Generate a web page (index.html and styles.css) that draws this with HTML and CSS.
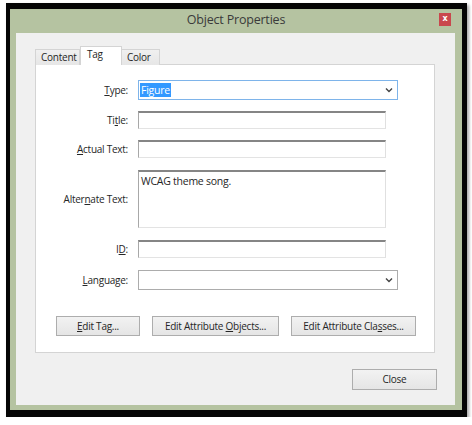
FILE: index.html
```html
<!DOCTYPE html>
<html>
<head>
<meta charset="utf-8">
<link rel="stylesheet" href="styles.css">
</head>
<body>
<div class="frame">
  <div class="window">
    <div class="titlebar">
      <span></span>
      <span class="title">Object Properties</span>
      <span class="close">x</span>
    </div>
    <div class="body">
      <div class="tabs">
        <div class="tab t-content">Content</div>
        <div class="tab t-tag active">Tag</div>
        <div class="tab t-color">Color</div>
      </div>
      <div class="panel">
        <div class="row r-type">
          <div class="label"><u>T</u>ype:</div>
          <div class="select focus"><span class="sel">Figure</span><svg class="chev" width="8" height="6" viewBox="0 0 8 6"><path d="M1 1.5 L4 4.5 L7 1.5" fill="none" stroke="#444" stroke-width="1.4"/></svg></div>
        </div>
        <div class="row r-gap11">
          <div class="label">Ti<u>t</u>le:</div>
          <div class="field"></div>
        </div>
        <div class="row r-gap11">
          <div class="label"><u>A</u>ctual Text:</div>
          <div class="field"></div>
        </div>
        <div class="row r-gap12">
          <div class="label">Alter<u>n</u>ate Text:</div>
          <div class="field area">WCAG theme song.</div>
        </div>
        <div class="row r-gap12">
          <div class="label">I<u>D</u>:</div>
          <div class="field"></div>
        </div>
        <div class="row r-gap12">
          <div class="label"><u>L</u>anguage:</div>
          <div class="select"><span></span><svg class="chev" width="8" height="6" viewBox="0 0 8 6"><path d="M1 1.5 L4 4.5 L7 1.5" fill="none" stroke="#444" stroke-width="1.4"/></svg></div>
        </div>
        <div class="buttons">
          <div class="btn b-tag"><u>E</u>dit Tag...</div>
          <div class="btn b-obj">Edit Attribute <u>O</u>bjects...</div>
          <div class="btn b-cls">Edit Attribute Cla<u>s</u>ses...</div>
        </div>
      </div>
      <div class="footer">
        <div class="btn b-close">Close</div>
      </div>
    </div>
  </div>
</div>
</body>
</html>
```
FILE: styles.css
```css
html, body {
  margin: 0;
  padding: 0;
  background: #ffffff;
}
body {
  font-family: "Open Sans", "Noto Sans", sans-serif;
  font-size: 10px;
  letter-spacing: -0.25px;
  color: #262626;
}
u {
  text-decoration: underline;
  text-underline-offset: 1px;
}
.frame {
  margin: 3px 0 0 6px;
  width: 461px;
  height: 414px;
  box-sizing: border-box;
  border-style: solid;
  border-color: #050505;
  border-width: 6px 5px 7px 4px;
  box-shadow: 2px 2px 3px rgba(0, 0, 0, 0.35);
}
.window {
  background: #b5c3a1;
  height: 100%;
  display: flex;
  flex-direction: column;
}
.titlebar {
  height: 24px;
  display: grid;
  grid-template-columns: 1fr auto 1fr;
  align-items: start;
}
.title {
  font-size: 12.5px;
  letter-spacing: -0.2px;
  color: #3a3a3a;
  line-height: 22px;
}
.close {
  justify-self: end;
  margin: 4px 11px 0 0;
  width: 12px;
  height: 13px;
  background: #c9474d;
  color: #fff;
  font-family: "DejaVu Sans", sans-serif;
  font-weight: bold;
  font-size: 8px;
  letter-spacing: 0;
  line-height: 12px;
  text-align: center;
}
.body {
  flex: 1;
  margin: 0 7px 5px 6px;
  background: #f0f0f0;
  padding: 14px 20px 0 19px;
  display: flex;
  flex-direction: column;
}
.tabs {
  display: flex;
  align-items: flex-end;
  height: 18px;
  position: relative;
  z-index: 1;
  margin-bottom: -1px;
}
.tab {
  box-sizing: border-box;
  height: 16px;
  border: 1px solid #d4d4d4;
  border-bottom: none;
  background: linear-gradient(#f0f0f0, #e6e6e6);
  line-height: 15px;
  padding-left: 5px;
  color: #262626;
}
.t-content { width: 45px; }
.t-tag { width: 42px; }
.t-color { width: 38px; border-left: none; }
.tab.active {
  height: 19px;
  background: #ffffff;
  border-color: #d4d4d4;
  line-height: 14px;
  padding-left: 6px;
}
.panel {
  box-sizing: border-box;
  height: 289px;
  background: #ffffff;
  border: 1px solid #d4d4d4;
  padding-top: 15px;
}
.row {
  display: flex;
  align-items: center;
}
.r-gap11 { margin-top: 11px; }
.r-gap12 { margin-top: 12px; }
.label {
  width: 92px;
  text-align: right;
  margin-right: 10px;
}
.field {
  box-sizing: border-box;
  width: 248px;
  height: 18px;
  background: #fff;
  border-style: solid;
  border-width: 2px 1px 1px 1px;
  border-color: #858585 #e0e0e0 #e3e3e3 #a8a8a8;
}
.field.area {
  height: 58px;
  padding: 2px 0 0 2px;
  font-size: 10.5px;
}
.select {
  box-sizing: border-box;
  width: 260px;
  height: 20px;
  border: 1px solid #acacac;
  background: #fff;
  display: flex;
  align-items: center;
  justify-content: space-between;
  padding: 0 4px 0 1px;
}
.select.focus {
  border-color: #7eb4ea;
}
.sel {
  background: #3399ff;
  color: #fff;
  line-height: 14px;
  padding: 0 1px;
  font-size: 10.5px;
}
.chev {
  display: block;
}
.buttons {
  display: flex;
  gap: 12px;
  margin-top: 26px;
  padding-left: 20px;
}
.btn {
  box-sizing: border-box;
  height: 20px;
  border: 1px solid #adadad;
  background: linear-gradient(#f2f2f2, #e5e5e5);
  text-align: center;
  line-height: 18px;
}
.b-tag { width: 84px; }
.b-obj { width: 127px; }
.b-cls { width: 125px; }
.footer {
  display: flex;
  justify-content: flex-end;
  padding-top: 16px;
  margin-right: -2px;
}
.b-close {
  width: 85px;
  height: 21px;
  line-height: 19px;
}
```
